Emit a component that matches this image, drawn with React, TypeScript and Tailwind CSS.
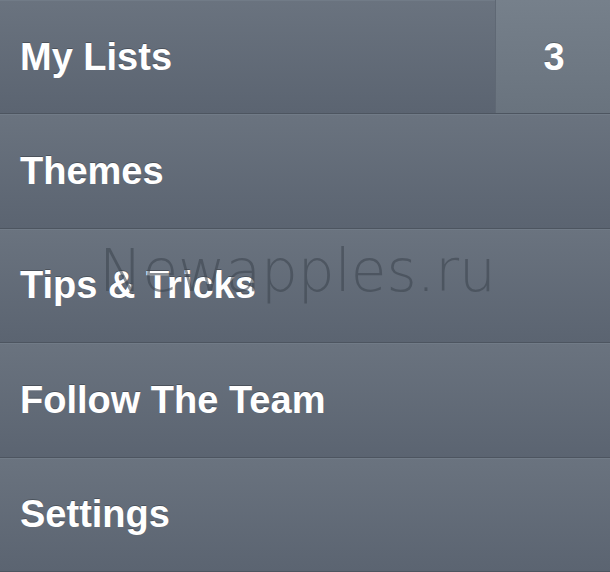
const items = ["My Lists", "Themes", "Tips & Tricks", "Follow The Team", "Settings"];

function Row({ label, badge }: { label: string; badge?: string }) {
  return (
    <div className="flex h-[114.4px] flex-col">
      <div className="flex flex-1 bg-gradient-to-b from-[#6a737f] to-[#5b6471] shadow-[inset_0_1px_0_#717b87]">
        <div className="flex flex-1 items-center pl-[20px]">
          <span className="text-[38px] font-bold leading-none text-white [text-shadow:0_-1px_0_rgba(0,0,0,0.25)]">
            {label}
          </span>
        </div>
        {badge && (
          <div className="flex w-[115px] items-center justify-center border-l border-[#5f6874] bg-gradient-to-b from-[#76808b] to-[#69737e] pl-[2px]">
            <span className="text-[38px] font-bold leading-none text-white [text-shadow:0_-1px_0_rgba(0,0,0,0.25)]">
              {badge}
            </span>
          </div>
        )}
      </div>
      <div className="h-px bg-[#4d5560]" />
    </div>
  );
}

export default function App() {
  return (
    <div className="relative h-[572px] w-[610px] overflow-hidden bg-[#5e6773] font-['Liberation_Sans',Arial,sans-serif]">
      {items.map((label, i) => (
        <Row key={label} label={label} badge={i === 0 ? "3" : undefined} />
      ))}

      {/* watermark */}
      <div className="pointer-events-none absolute left-[99px] top-[242px] font-['DejaVu_Sans',sans-serif] text-[58px] font-extralight leading-none text-[#3e4650]/60">
        Newapples.ru
      </div>
    </div>
  );
}
